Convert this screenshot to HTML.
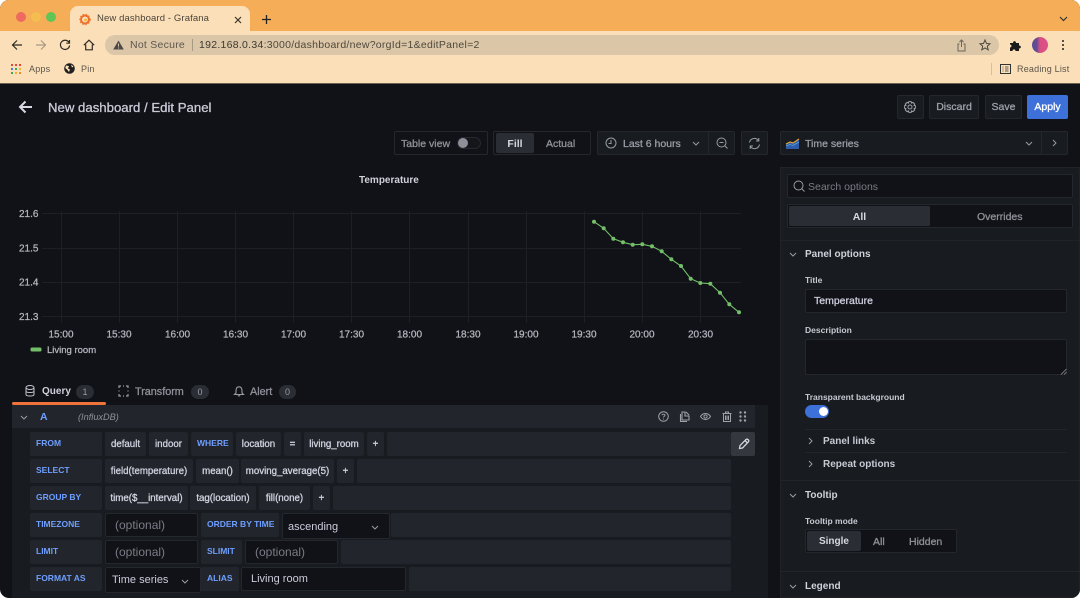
<!DOCTYPE html>
<html><head><meta charset="utf-8"><style>
*{box-sizing:border-box}
html,body{margin:0;padding:0;width:1080px;height:598px;overflow:hidden;background:#fff;font-family:"Liberation Sans",sans-serif}
#w{position:absolute;left:0;top:0;width:1080px;height:598px;overflow:hidden;border-radius:9px;background:#111217;filter:blur(.3px)}
.a,.c,.l,.f,.i,.t{position:absolute;white-space:nowrap}
.t{line-height:14px}
.m{-webkit-text-stroke:.3px currentColor}
.c,.l,.f,.i{top:0;height:24px;border-radius:2px;line-height:24px;font-size:9.7px;-webkit-text-stroke:.3px currentColor}
.c{background:#22252b;color:#d2d2e0;text-align:center;line-height:25px}
.l{background:#22252b;color:#6e9fff;padding-left:6px;font-size:8.500px;font-weight:bold;-webkit-text-stroke:0;line-height:23px}
.f{background:#22252b}
.i{background:#111217;border:1px solid #24272d;color:#7a7c86;font-size:12px;-webkit-text-stroke:0;padding-left:9px;line-height:22px}
.r{position:absolute;left:0;width:768px;height:24px}
.b{position:absolute;border:1px solid #24272c;background:#181b1f;border-radius:2px}
svg{position:absolute;overflow:visible}
</style></head><body><div id="w">

<!-- browser chrome -->
<div class="a" style="left:0;top:0;width:1080px;height:32px;background:#f5ae57"></div>
<div class="a" style="left:0;top:31px;width:1080px;height:52px;background:#fadfb9"></div>
<div class="a" style="left:70px;top:6px;width:180px;height:26px;background:#fadfb9;border-radius:8px 8px 0 0"></div>
<div class="a" style="left:15.5px;top:12px;width:10px;height:10px;border-radius:50%;background:#ee6a5f"></div>
<div class="a" style="left:30.5px;top:12px;width:10px;height:10px;border-radius:50%;background:#f5bd4f"></div>
<div class="a" style="left:45.5px;top:12px;width:10px;height:10px;border-radius:50%;background:#61c454"></div>
<svg style="left:79px;top:13px" width="12" height="12" viewBox="0 0 12 12"><circle cx="6" cy="6.500" r="4" fill="none" stroke="#ec6d2c" stroke-width="2"/><circle cx="6" cy="6.500" r="5" fill="none" stroke="#ee7d2c" stroke-width="1.500" stroke-dasharray="1.500 1.500"/><circle cx="6.500" cy="7" r="1.400" fill="#f9b233"/></svg>
<div class="t" style="left:97px;top:12px;font-size:9.5px;color:#4c4438;letter-spacing:.12px">New dashboard - Grafana</div>
<svg style="left:234px;top:16px" width="8" height="8"><path d="M1 1L7 7M7 1L1 7" stroke="#3a342a" stroke-width="1.2"/></svg>
<svg style="left:261px;top:14px" width="11" height="11"><path d="M5.500 1V10M1 5.500H10" stroke="#222" stroke-width="1.3"/></svg>
<svg style="left:1059px;top:16px" width="9" height="6"><path d="M1 1L4.500 4.500L8 1" stroke="#333" stroke-width="1.2" fill="none"/></svg>
<svg style="left:11px;top:39px" width="12" height="12"><path d="M11 6H1.500M6 1.500L1.500 6L6 10.500" stroke="#2f2a22" stroke-width="1.2" fill="none"/></svg>
<svg style="left:35px;top:39px" width="12" height="12"><path d="M1 6H10.500M6 1.500L10.500 6L6 10.500" stroke="#a89a85" stroke-width="1.200" fill="none"/></svg>
<svg style="left:59px;top:39px" width="12" height="12"><path d="M10 3.500A4.600 4.600 0 1 0 10.600 6.500M10.500 1V4.200H7.300" stroke="#2f2a22" stroke-width="1.200" fill="none"/></svg>
<svg style="left:83px;top:39px" width="12" height="12"><path d="M.8 6.200L6 1.200L11.200 6.200M2.700 5.500V10.800H9.300V5.500" stroke="#2f2a22" stroke-width="1.200" fill="none"/></svg>
<div class="a" style="left:105px;top:35px;width:894px;height:20px;border-radius:10px;background:#dcc6a8"></div>
<svg style="left:113px;top:40px" width="11" height="10"><path d="M5.500 .5L10.800 9.500H.2Z" fill="#4c4a48"/><path d="M5.500 3.500V6.500M5.500 7.500V8.500" stroke="#dcc6a8" stroke-width="1"/></svg>
<div class="t" style="left:130px;top:38px;font-size:10.500px;color:#5e574b;letter-spacing:.25px">Not Secure</div>
<div class="a" style="left:191.500px;top:39px;width:1px;height:12px;background:#a89a85"></div>
<div class="t" style="left:199px;top:38px;font-size:10.500px;color:#3c382f;letter-spacing:.27px">192.168.0.34<span style="color:#4d483c">:3000/dashboard/new?orgId=1&amp;editPanel=2</span></div>
<svg style="left:957px;top:39px" width="9" height="13"><path d="M4.500 8V1M2.500 3L4.500 1L6.500 3M2.500 5H1V12H8V5H6.500" stroke="#6d675a" stroke-width="1" fill="none"/></svg>
<svg style="left:979px;top:39px" width="12" height="12"><path d="M6 1L7.500 4.500L11 4.800L8.300 7.200L9.200 10.800L6 8.900L2.800 10.800L3.700 7.200L1 4.800L4.500 4.500Z" stroke="#4d483e" stroke-width="1" fill="none"/></svg>
<svg style="left:1010px;top:40px" width="11" height="11"><path d="M0 3H3C3 .5 6 .5 6 3H9V5.500C11.500 5.500 11.500 8.500 9 8.500V11H5.500C5.500 8.800 2.500 8.800 2.500 11H0V7.500C2 7.500 2 4.500 0 4.500Z" fill="#1b1b1b"/></svg>
<div class="a" style="left:1031.500px;top:37px;width:16px;height:16px;border-radius:50%;background:linear-gradient(90deg,#5a4a98 0,#6a4a90 30%,#d94f82 50%,#e0508a 100%)"></div>
<div class="a" style="left:1062px;top:40px;width:2px;height:2px;background:#222;box-shadow:0 4px #222,0 8px #222;border-radius:50%"></div>
<svg style="left:11px;top:64px" width="10" height="10"><g><rect x="0" y="0" width="2" height="2" fill="#e2453a"/><rect x="4" y="0" width="2" height="2" fill="#e2453a"/><rect x="8" y="0" width="2" height="2" fill="#e2453a"/><rect x="0" y="4" width="2" height="2" fill="#3f7de0"/><rect x="4" y="4" width="2" height="2" fill="#3fa856"/><rect x="8" y="4" width="2" height="2" fill="#f2b233"/><rect x="0" y="8" width="2" height="2" fill="#3fa856"/><rect x="4" y="8" width="2" height="2" fill="#f2b233"/><rect x="8" y="8" width="2" height="2" fill="#ee8a2c"/></g></svg>
<div class="t" style="left:29px;top:62px;font-size:9px;color:#5c5548;letter-spacing:.2px">Apps</div>
<svg style="left:63.500px;top:63px" width="11" height="11"><circle cx="5.500" cy="5.500" r="5.300" fill="#1f1f1f"/><path d="M2 2.500L5 3L4 5.500L6 6.500L5 9L3 6.500L1.200 5ZM7 1.500L9.500 3.500L8 4.500Z" fill="#fadfb9"/></svg>
<div class="t" style="left:81px;top:62px;font-size:9px;color:#5c5548;letter-spacing:.2px">Pin</div>
<div class="a" style="left:991px;top:63px;width:1px;height:12px;background:#d5bfa0"></div>
<svg style="left:1000px;top:64px" width="11" height="10"><rect x=".5" y=".5" width="10" height="9" fill="none" stroke="#333" stroke-width="1"/><path d="M2.500 3H3.500M5 3H8.500M2.500 5H3.500M5 5H8.500M2.500 7H3.500M5 7H8.500" stroke="#333" stroke-width=".8"/></svg>
<div class="t" style="left:1017px;top:62px;font-size:9px;color:#5c5548;letter-spacing:.2px">Reading List</div>
<div class="a" style="left:0;top:82.500px;width:1080px;height:1px;background:#6a5f50"></div>

<!-- grafana header -->
<svg style="left:18px;top:100px" width="15" height="14"><path d="M14 7H2M7.500 1.500L2 7L7.500 12.500" stroke="#d8d9e2" stroke-width="2" fill="none"/></svg>
<div class="t m" style="left:48px;top:101px;font-size:13.200px;color:#c9cad6">New dashboard / Edit Panel</div>

<div class="b" style="left:897px;top:95px;width:27px;height:24px"></div>
<svg style="left:904px;top:101px" width="12" height="12" viewBox="0 0 12 12"><circle cx="6" cy="6" r="2" fill="none" stroke="#a0a1ab" stroke-width="1"/><path d="M4.800.6H7.200L7.600 2.100L9 1.400L10.700 3.100L10 4.400L11.400 4.800V7.200L10 7.600L10.700 8.900L9 10.600L7.600 9.900L7.200 11.400H4.800L4.400 9.900L3 10.600L1.300 8.900L2 7.600L.6 7.200V4.800L2 4.400L1.300 3.100L3 1.400L4.400 2.100Z" fill="none" stroke="#a0a1ab" stroke-width="1"/></svg>
<div class="b" style="left:929px;top:95px;width:50px;height:24px;text-align:center;font-size:10.500px;line-height:23px;color:#9fa0aa;-webkit-text-stroke:.3px #9fa0aa">Discard</div>
<div class="b" style="left:985px;top:95px;width:37px;height:24px;text-align:center;font-size:10.500px;line-height:23px;color:#9fa0aa;-webkit-text-stroke:.3px #9fa0aa">Save</div>
<div class="a" style="left:1027px;top:95px;width:41px;height:24px;border-radius:2px;background:#3d71d9;text-align:center;font-size:10.500px;line-height:25px;color:#fff;-webkit-text-stroke:.3px #fff">Apply</div>

<!-- toolbar -->
<div class="a" style="left:394px;top:131px;width:94px;height:24px;border:1px solid #24272c;border-radius:2px"></div>
<div class="t m" style="left:401px;top:136.500px;font-size:10.500px;color:#8f9099">Table view</div>
<div class="a" style="left:457px;top:137px;width:24px;height:12px;border-radius:6px;border:1px solid #26292f;background:#14161a"></div>
<div class="a" style="left:458px;top:138px;width:10px;height:10px;border-radius:50%;background:#8e8f98"></div>
<div class="a" style="left:493px;top:131px;width:98px;height:24px;border:1px solid #24272c;border-radius:2px"></div>
<div class="a" style="left:496px;top:133px;width:38px;height:20px;background:#2a2d33;border-radius:2px;text-align:center;font-size:10.500px;line-height:22px;font-weight:bold;color:#d6d7e0">Fill</div>
<div class="t m" style="left:546px;top:136.500px;font-size:10.500px;color:#8f9099">Actual</div>
<div class="b" style="left:597px;top:131px;width:138px;height:24px"></div>
<div class="a" style="left:708px;top:132px;width:1px;height:22px;background:#24272c"></div>
<svg style="left:605px;top:137px" width="12" height="12"><circle cx="6" cy="6" r="5" fill="none" stroke="#9a9ba5" stroke-width="1"/><path d="M6 3V6.500H3.500" fill="none" stroke="#9a9ba5" stroke-width="1"/></svg>
<div class="t m" style="left:623px;top:136.500px;font-size:10.500px;color:#9a9ba5">Last 6 hours</div>
<svg style="left:692px;top:141px" width="8" height="5"><path d="M1 1L4 4L7 1" fill="none" stroke="#9a9ba5" stroke-width="1"/></svg>
<svg style="left:716px;top:137px" width="12" height="12"><circle cx="5.500" cy="5.500" r="4.500" fill="none" stroke="#9a9ba5" stroke-width="1"/><path d="M3.500 5.500H7.500M9 9L11.500 11.500" stroke="#9a9ba5" stroke-width="1"/></svg>
<div class="b" style="left:741px;top:131px;width:27px;height:24px"></div>
<svg style="left:748px;top:137px" width="13" height="13"><path d="M1.500 5.500A5 5 0 0 1 10.500 3.500M11.500 7.500A5 5 0 0 1 2.500 9.500M10.800 1V4H8M2.200 12V9H5" fill="none" stroke="#9a9ba5" stroke-width="1"/></svg>
<div class="b" style="left:780px;top:131px;width:288px;height:24px"></div>
<div class="a" style="left:1041px;top:132px;width:1px;height:22px;background:#24272c"></div>
<svg style="left:786px;top:138px" width="13" height="11"><path d="M0 6L4 4L7 5L13 1V11H0Z" fill="#2f5ba8"/><path d="M0 6L4 4L7 5L13 1" fill="none" stroke="#e0a23a" stroke-width="1.200"/><path d="M0 8L4 6.500L7 7.500L13 4" fill="none" stroke="#58a6d6" stroke-width=".8"/></svg>
<div class="t m" style="left:805px;top:136.500px;font-size:10.500px;color:#9a9ba5">Time series</div>
<svg style="left:1025px;top:141px" width="8" height="5"><path d="M1 1L4 4L7 1" fill="none" stroke="#9a9ba5" stroke-width="1"/></svg>
<svg style="left:1052px;top:139px" width="5" height="8"><path d="M1 1L4 4L1 7" fill="none" stroke="#9a9ba5" stroke-width="1"/></svg>

<!-- chart -->
<div class="t" style="left:359px;top:174px;font-size:10px;color:#d0d1da;font-weight:bold">Temperature</div>
<svg style="left:0;top:0" width="780" height="360">
<g stroke="#1d1f25" stroke-width="1">
<path d="M42 213.500H741M42 248.500H741M42 282.500H741M42 316.500H741"/>
<path d="M61.500 211V323M119.500 211V323M177.500 211V323M235.500 211V323M293.500 211V323M351.500 211V323M409.500 211V323M468.500 211V323M526.500 211V323M584.500 211V323M642.500 211V323M700.500 211V323"/>
</g>
<polyline fill="none" stroke="#73bf69" stroke-width="1.100" points="594,221.700 603.700,228.300 613.300,238.700 623,242.300 632.700,244.700 642.300,244.300 652,246.300 661.700,251.300 671.300,259.300 681,266 690.700,278.700 700.300,283 710.300,283.700 720,292.700 729.300,304.300 739,312.300"/>
<g fill="#73bf69"><circle cx="594" cy="221.700" r="2"/><circle cx="603.700" cy="228.300" r="2"/><circle cx="613.300" cy="238.700" r="2"/><circle cx="623" cy="242.300" r="2"/><circle cx="632.700" cy="244.700" r="2"/><circle cx="642.300" cy="244.300" r="2"/><circle cx="652" cy="246.300" r="2"/><circle cx="661.700" cy="251.300" r="2"/><circle cx="671.300" cy="259.300" r="2"/><circle cx="681" cy="266" r="2"/><circle cx="690.700" cy="278.700" r="2"/><circle cx="700.300" cy="283" r="2"/><circle cx="710.300" cy="283.700" r="2"/><circle cx="720" cy="292.700" r="2"/><circle cx="729.300" cy="304.300" r="2"/><circle cx="739" cy="312.300" r="2"/></g>
<g font-family="Liberation Sans" font-size="10" fill="#b5b6c0" stroke="#b5b6c0" stroke-width=".25">
<text x="19" y="217">21.6</text><text x="19" y="251.500">21.5</text><text x="19" y="285.500">21.4</text><text x="19" y="320">21.3</text>
<g text-anchor="middle"><text x="61" y="337.500">15:00</text><text x="119" y="337.500">15:30</text><text x="177.500" y="337.500">16:00</text><text x="235.500" y="337.500">16:30</text><text x="293.500" y="337.500">17:00</text><text x="351.500" y="337.500">17:30</text><text x="409.500" y="337.500">18:00</text><text x="468" y="337.500">18:30</text><text x="526" y="337.500">19:00</text><text x="584" y="337.500">19:30</text><text x="642" y="337.500">20:00</text><text x="700.500" y="337.500">20:30</text></g>
<text x="47" y="353" font-size="9.500">Living room</text></g>
<rect x="30.500" y="347.500" width="11" height="4" rx="1.500" fill="#73bf69"/>
</svg>

<!-- query tabs -->
<svg style="left:25px;top:385px" width="10" height="12"><ellipse cx="5" cy="2.500" rx="4" ry="2" fill="none" stroke="#c4c5d0"/><path d="M1 2.500V9.500C1 11.500 9 11.500 9 9.500V2.500M1 6C1 8 9 8 9 6" fill="none" stroke="#c4c5d0"/></svg>
<div class="t" style="left:42px;top:385px;font-size:10px;color:#d0d1da;font-weight:bold">Query</div>
<div class="a" style="left:76px;top:385px;width:18px;height:14px;border-radius:7px;background:#2a2d33;text-align:center;font-size:9px;line-height:14px;color:#9a9ba5">1</div>
<svg style="left:118px;top:385px" width="11" height="12"><path d="M1 3V1H3M8 1H10V3M10 9V11H8M3 11H1V9M5 1H6M1 5.500V6.500M5 11H6M10 5.500V6.500" fill="none" stroke="#9a9ba5" stroke-width="1.200"/></svg>
<div class="t m" style="left:135px;top:385px;font-size:10.800px;color:#8f9099">Transform</div>
<div class="a" style="left:191px;top:385px;width:18px;height:14px;border-radius:7px;background:#2a2d33;text-align:center;font-size:9px;line-height:14px;color:#9a9ba5">0</div>
<svg style="left:234px;top:386px" width="10" height="11"><path d="M5 .8C7.500 .8 8 3 8 5V7L9.500 8.500H.5L2 7V5C2 3 2.500 .8 5 .8ZM3.800 9.800H6.200" fill="none" stroke="#9a9ba5" stroke-width="1.100"/></svg>
<div class="t m" style="left:250px;top:385px;font-size:10.800px;color:#8f9099">Alert</div>
<div class="a" style="left:279px;top:385px;width:17px;height:14px;border-radius:7px;background:#2a2d33;text-align:center;font-size:9px;line-height:14px;color:#9a9ba5">0</div>
<div class="a" style="left:12px;top:402px;width:94px;height:3px;border-radius:2px;background:#f0743a"></div>

<!-- query panel -->
<div class="a" style="left:12px;top:405px;width:756px;height:193px;background:#181b1f"></div>
<div class="a" style="left:12px;top:405px;width:743px;height:23px;background:#22252b"></div>
<svg style="left:20px;top:415px" width="8" height="5"><path d="M1 1L4 4L7 1" fill="none" stroke="#9a9ba5" stroke-width="1"/></svg>
<div class="t" style="left:40px;top:410px;font-size:10.500px;font-weight:bold;color:#6e9fff">A</div>
<div class="t" style="left:78px;top:410px;font-size:9.200px;font-style:italic;color:#8f9099">(InfluxDB)</div>
<svg style="left:658px;top:411px" width="11" height="11"><circle cx="5.500" cy="5.500" r="4.800" fill="none" stroke="#a0a1ab"/><path d="M4 4.300C4 2.800 7 2.800 7 4.300C7 5.300 5.500 5.300 5.500 6.500M5.500 7.500V8.500" fill="none" stroke="#a0a1ab" stroke-width=".9"/></svg>
<svg style="left:679px;top:411px" width="11" height="11"><path d="M3 1H6V5H10V9H3ZM7 1L10 4M1.500 3V10.500H8" fill="none" stroke="#a0a1ab" stroke-width="1.100"/></svg>
<svg style="left:700px;top:412px" width="11" height="9"><path d="M.5 4.500C3 .5 8 .5 10.500 4.500C8 8.500 3 8.500 .5 4.500Z" fill="none" stroke="#a0a1ab"/><circle cx="5.500" cy="4.500" r="1.600" fill="none" stroke="#a0a1ab"/></svg>
<svg style="left:722px;top:411px" width="10" height="11"><path d="M.5 2.500H9.500M3.500 2.500V1H6.500V2.500M1.500 2.500V10.500H8.500V2.500M3.500 4.500V9M5 4.500V9M6.500 4.500V9" fill="none" stroke="#a0a1ab" stroke-width="1"/></svg>
<svg style="left:739px;top:411px" width="8" height="11"><g fill="#a0a1ab"><circle cx="1.500" cy="1.500" r="1.200"/><circle cx="6" cy="1.500" r="1.200"/><circle cx="1.500" cy="5.500" r="1.200"/><circle cx="6" cy="5.500" r="1.200"/><circle cx="1.500" cy="9.500" r="1.200"/><circle cx="6" cy="9.500" r="1.200"/></g></svg>

<div class="r" style="top:432px">
<div class="l" style="left:30px;width:72px">FROM</div>
<div class="c" style="left:105px;width:41px">default</div>
<div class="c" style="left:149px;width:39px">indoor</div>
<div class="l" style="left:191px;width:42px">WHERE</div>
<div class="c" style="left:236px;width:45px">location</div>
<div class="c" style="left:284px;width:17px">=</div>
<div class="c" style="left:304px;width:60px">living_room</div>
<div class="c" style="left:367px;width:17px">+</div>
<div class="f" style="left:387px;width:344px"></div>
<div class="f" style="left:731px;width:24px;background:#34373d"></div>
<svg style="left:738px;top:6px" width="12" height="12"><path d="M1.500 10.500L2 7.500L7.800 1.700C8.500 1 9.500 1 10.200 1.700C10.900 2.400 10.900 3.400 10.200 4.100L4.500 10ZM7 2.500L9.500 5" fill="none" stroke="#d5d6df" stroke-width="1.300"/></svg>
</div>
<div class="r" style="top:459px">
<div class="l" style="left:30px;width:72px">SELECT</div>
<div class="c" style="left:105px;width:88px">field(temperature)</div>
<div class="c" style="left:196px;width:43px">mean()</div>
<div class="c" style="left:241px;width:93px">moving_average(5)</div>
<div class="c" style="left:337px;width:17px">+</div>
<div class="f" style="left:357px;width:374px"></div>
</div>
<div class="r" style="top:486px">
<div class="l" style="left:30px;width:72px">GROUP BY</div>
<div class="c" style="left:105px;width:83px">time($__interval)</div>
<div class="c" style="left:190px;width:66px">tag(location)</div>
<div class="c" style="left:259px;width:51px">fill(none)</div>
<div class="c" style="left:313px;width:17px">+</div>
<div class="f" style="left:333px;width:398px"></div>
</div>
<div class="r" style="top:513px">
<div class="l" style="left:30px;width:72px">TIMEZONE</div>
<div class="i" style="left:105px;width:93px">(optional)</div>
<div class="l" style="left:201px;width:78px">ORDER BY TIME</div>
<div class="i" style="left:282px;width:108px;color:#ccccdc;padding-left:5px;top:0;height:26px;line-height:26px;font-size:11px">ascending</div>
<svg style="left:371px;top:12px" width="8" height="5"><path d="M1 1L4 4L7 1" fill="none" stroke="#9a9ba5" stroke-width="1"/></svg>
<div class="f" style="left:391px;width:340px"></div>
</div>
<div class="r" style="top:540px">
<div class="l" style="left:30px;width:72px">LIMIT</div>
<div class="i" style="left:105px;width:93px">(optional)</div>
<div class="l" style="left:201px;width:41px">SLIMIT</div>
<div class="i" style="left:245px;width:93px">(optional)</div>
<div class="f" style="left:341px;width:390px"></div>
</div>
<div class="r" style="top:567px">
<div class="l" style="left:30px;width:72px">FORMAT AS</div>
<div class="i" style="left:105px;width:96px;color:#ccccdc;padding-left:6px;height:26px;line-height:25px;font-size:11px">Time series</div>
<svg style="left:181px;top:12px" width="8" height="5"><path d="M1 1L4 4L7 1" fill="none" stroke="#9a9ba5" stroke-width="1"/></svg>
<div class="l" style="left:201px;width:38px">ALIAS</div>
<div class="i" style="left:241px;width:165px;color:#ccccdc;line-height:22px;font-size:11px">Living room</div>
<div class="f" style="left:409px;width:322px"></div>
</div>

<!-- right options pane -->
<div class="a" style="left:780px;top:167px;width:300px;height:431px;background:#181b1f;border:1px solid #202226"></div>
<div class="a" style="left:787px;top:174px;width:286px;height:24px;background:#111217;border:1px solid #24272d;border-radius:2px"></div>
<svg style="left:793px;top:180px" width="12" height="12"><circle cx="5.500" cy="5.500" r="4.500" fill="none" stroke="#9a9ba5"/><path d="M9 9L11.500 11.500" stroke="#9a9ba5"/></svg>
<div class="t" style="left:808px;top:180px;font-size:10.500px;color:#7a7c86">Search options</div>
<div class="a" style="left:787px;top:204px;width:286px;height:24px;background:#111217;border:1px solid #24272d;border-radius:2px"></div>
<div class="a" style="left:789px;top:206px;width:141px;height:20px;background:#2a2d33;border-radius:2px;text-align:center;font-size:10.500px;line-height:22px;font-weight:bold;color:#d6d7e0">All</div>
<div class="t m" style="left:977px;top:210px;font-size:10.500px;color:#8f9099">Overrides</div>
<div class="a" style="left:781px;top:240px;width:299px;height:1px;background:#202328"></div>
<svg style="left:789px;top:252px" width="8" height="5"><path d="M1 1L4 4L7 1" fill="none" stroke="#9a9ba5" stroke-width="1"/></svg>
<div class="t" style="left:805px;top:248px;font-size:10px;color:#d0d1da;font-weight:bold">Panel options</div>
<div class="t" style="left:805px;top:273px;font-size:8.500px;color:#c8c9d3;font-weight:bold">Title</div>
<div class="a" style="left:805px;top:289px;width:262px;height:24px;background:#111217;border:1px solid #24272d;border-radius:2px;padding-left:8px;font-size:10.500px;line-height:22px;color:#ccccdc;-webkit-text-stroke:.3px #ccccdc">Temperature</div>
<div class="t" style="left:805px;top:323px;font-size:8.500px;color:#c8c9d3;font-weight:bold">Description</div>
<div class="a" style="left:805px;top:339px;width:262px;height:36px;background:#111217;border:1px solid #24272d;border-radius:2px"></div>
<svg style="left:1061px;top:369px" width="6" height="6"><path d="M0 5.500L5.500 0M3 5.500L5.500 3" stroke="#8f9099" stroke-width=".8"/></svg>
<div class="t" style="left:805px;top:390px;font-size:8.500px;color:#c8c9d3;font-weight:bold">Transparent background</div>
<div class="a" style="left:805px;top:405px;width:24px;height:13px;border-radius:7px;background:#3d71d9"></div>
<div class="a" style="left:819px;top:407px;width:9px;height:9px;border-radius:50%;background:#fff"></div>
<div class="a" style="left:805px;top:429px;width:262px;height:1px;background:#222529"></div>
<svg style="left:808px;top:437px" width="5" height="8"><path d="M1 1L4 4L1 7" fill="none" stroke="#9a9ba5" stroke-width="1"/></svg>
<div class="t" style="left:823px;top:435px;font-size:10px;color:#c8c9d3;font-weight:bold">Panel links</div>
<div class="a" style="left:805px;top:452px;width:262px;height:1px;background:#222529"></div>
<svg style="left:808px;top:460px" width="5" height="8"><path d="M1 1L4 4L1 7" fill="none" stroke="#9a9ba5" stroke-width="1"/></svg>
<div class="t" style="left:823px;top:458px;font-size:10px;color:#c8c9d3;font-weight:bold">Repeat options</div>
<div class="a" style="left:781px;top:480px;width:299px;height:1px;background:#222529"></div>
<svg style="left:789px;top:493px" width="8" height="5"><path d="M1 1L4 4L7 1" fill="none" stroke="#9a9ba5" stroke-width="1"/></svg>
<div class="t" style="left:805px;top:489px;font-size:10px;color:#d0d1da;font-weight:bold">Tooltip</div>
<div class="t" style="left:805px;top:514px;font-size:8.500px;color:#c8c9d3;font-weight:bold">Tooltip mode</div>
<div class="a" style="left:805px;top:529px;width:152px;height:24px;background:#111217;border:1px solid #24272d;border-radius:2px"></div>
<div class="a" style="left:807px;top:531px;width:54px;height:20px;background:#2a2d33;border-radius:2px;text-align:center;font-size:10px;line-height:22px;font-weight:bold;color:#d6d7e0">Single</div>
<div class="t m" style="left:873px;top:535px;font-size:10.500px;color:#8f9099">All</div>
<div class="t m" style="left:909px;top:535px;font-size:10.500px;color:#8f9099">Hidden</div>
<div class="a" style="left:781px;top:571px;width:299px;height:1px;background:#222529"></div>
<svg style="left:789px;top:584px" width="8" height="5"><path d="M1 1L4 4L7 1" fill="none" stroke="#9a9ba5" stroke-width="1"/></svg>
<div class="t" style="left:805px;top:580px;font-size:10px;color:#d0d1da;font-weight:bold">Legend</div>

</div></body></html>
